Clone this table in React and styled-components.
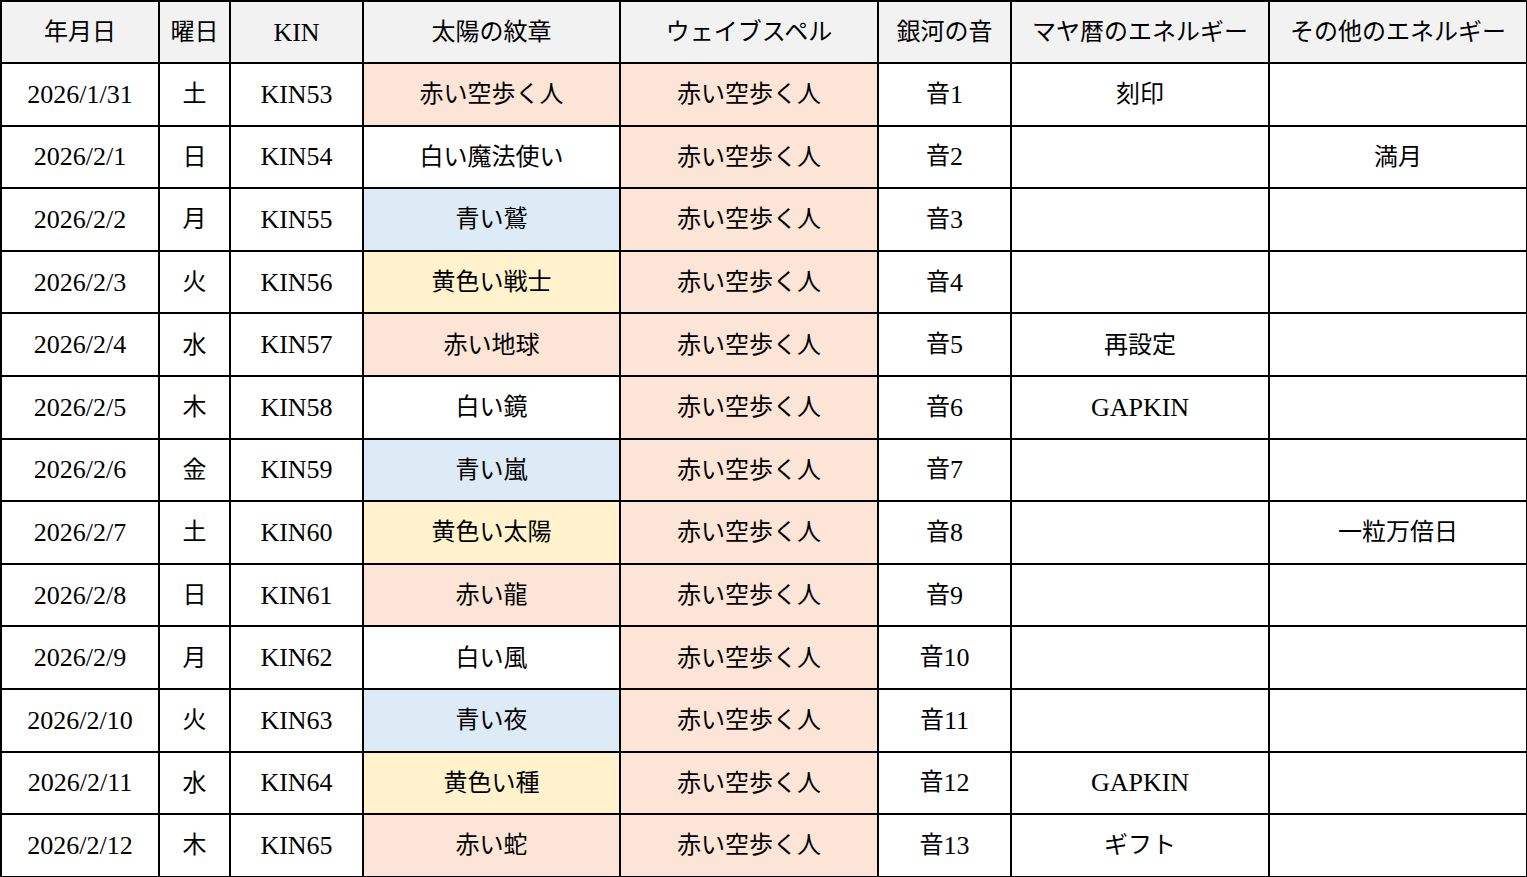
import styled, { createGlobalStyle } from "styled-components";

const GlobalStyle = createGlobalStyle`
    html, body {
        margin: 0;
        padding: 0;
        background: #ffffff;
    }
`

const colors = {
    red: '#fce4d6',
    blue: '#ddebf7',
    yellow: '#fff2cc',
    none: '#ffffff',
}

export const Table = styled.table`
    width: 1526px;
    table-layout: fixed;
    border-collapse: collapse;
    font-family: 'Liberation Serif', 'Noto Sans CJK JP', serif;
    font-size: 24px;
    line-height: 28px;
    color: #000;
`

export const Row = styled.tr`
    height: ${({ head }) => head ? '62px' : '62.6px'};
`

export const HeadCell = styled.th`
    background: #f2f2f2;
    font-weight: 400;
    border: 2px solid #000;
    text-align: center;
    vertical-align: middle;
    padding: 0;
    white-space: nowrap;
`

export const Cell = styled.td`
    background: ${({ tone }) => colors[tone || 'none']};
    border: 2px solid #000;
    text-align: center;
    vertical-align: middle;
    padding: 0;
    white-space: nowrap;
`

export const Latin = styled.span`
    font-size: 26px;
    line-height: 28px;
    vertical-align: -1px;
`

const columns = [158, 71, 133, 257, 258, 133, 258, 258]
const headers = ['年月日', '曜日', 'KIN', '太陽の紋章', 'ウェイブスペル', '銀河の音', 'マヤ暦のエネルギー', 'その他のエネルギー']

const rows = [
    ['2026/1/31', '土', 53, '赤い空歩く人', 'red', 1, '刻印', ''],
    ['2026/2/1', '日', 54, '白い魔法使い', 'none', 2, '', '満月'],
    ['2026/2/2', '月', 55, '青い鷲', 'blue', 3, '', ''],
    ['2026/2/3', '火', 56, '黄色い戦士', 'yellow', 4, '', ''],
    ['2026/2/4', '水', 57, '赤い地球', 'red', 5, '再設定', ''],
    ['2026/2/5', '木', 58, '白い鏡', 'none', 6, 'GAPKIN', ''],
    ['2026/2/6', '金', 59, '青い嵐', 'blue', 7, '', ''],
    ['2026/2/7', '土', 60, '黄色い太陽', 'yellow', 8, '', '一粒万倍日'],
    ['2026/2/8', '日', 61, '赤い龍', 'red', 9, '', ''],
    ['2026/2/9', '月', 62, '白い風', 'none', 10, '', ''],
    ['2026/2/10', '火', 63, '青い夜', 'blue', 11, '', ''],
    ['2026/2/11', '水', 64, '黄色い種', 'yellow', 12, 'GAPKIN', ''],
    ['2026/2/12', '木', 65, '赤い蛇', 'red', 13, 'ギフト', ''],
]

const App = () => {
    return (
        <>
            <GlobalStyle />
            <Table>
                <colgroup>
                    { columns.map((w, i) => <col key={i} style={{ width: w }} />) }
                </colgroup>
                <thead>
                    <Row head>
                        { headers.map(h => (
                            <HeadCell key={h}>
                                { h === 'KIN' ? <Latin>{h}</Latin> : h }
                            </HeadCell>
                        )) }
                    </Row>
                </thead>
                <tbody>
                    { rows.map(([date, day, kin, seal, tone, tone13, maya, other]) => (
                        <Row key={date}>
                            <Cell><Latin>{ date }</Latin></Cell>
                            <Cell>{ day }</Cell>
                            <Cell><Latin>KIN{ kin }</Latin></Cell>
                            <Cell tone={tone}>{ seal }</Cell>
                            <Cell tone="red">赤い空歩く人</Cell>
                            <Cell>音<Latin>{ tone13 }</Latin></Cell>
                            <Cell>{ maya === 'GAPKIN' ? <Latin>{maya}</Latin> : maya }</Cell>
                            <Cell>{ other }</Cell>
                        </Row>
                    )) }
                </tbody>
            </Table>
        </>
    )
}

export default App
